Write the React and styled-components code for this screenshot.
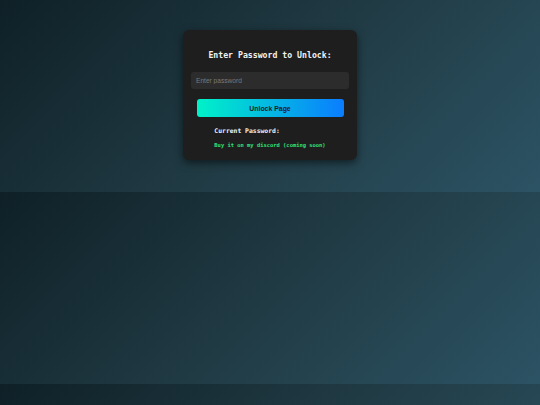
import React from "react";
import styled, { createGlobalStyle } from "styled-components";

const GlobalStyle = createGlobalStyle`
  body {
    margin: 0;
    background: linear-gradient(135deg, #0f2027, #203a43, #2c5364);
  }
`;

const Page = styled.div`
  display: flex;
  justify-content: center;
  padding: 30px 0 32px;
`;

const Card = styled.div`
  width: 174px;
  box-sizing: border-box;
  padding: 20px 8px 11px;
  background-color: #1e1e1e;
  border-radius: 6px;
  box-shadow: 0 3px 8px rgba(0, 0, 0, 0.55);
  display: flex;
  flex-direction: column;
  align-items: center;
`;

const Title = styled.h2`
  margin: 0;
  font-family: "DejaVu Sans Mono", monospace;
  font-size: 8.2px;
  line-height: 10px;
  font-weight: bold;
  color: #f2f2f2;
`;

const Input = styled.input`
  margin-top: 11.5px;
  width: 158px;
  height: 17.5px;
  box-sizing: border-box;
  padding: 0 5px;
  border: none;
  border-radius: 3px;
  background-color: #2c2c2c;
  color: #eee;
  font-family: "Liberation Sans", Arial, sans-serif;
  font-size: 6.6px;
  outline: none;

  &::placeholder {
    color: #7a7a7a;
  }
`;

const Button = styled.button`
  margin-top: 10px;
  width: 147px;
  height: 18px;
  border: none;
  border-radius: 3px;
  background: linear-gradient(90deg, #00f2c8, #0a7dff);
  color: #1c1c1c;
  font-family: "Liberation Sans", Arial, sans-serif;
  font-weight: bold;
  font-size: 6.9px;
  cursor: pointer;
`;

const Info = styled.div`
  margin-top: 10px;
  text-align: left;
  font-family: "DejaVu Sans Mono", monospace;
  font-weight: bold;
`;

const Label = styled.div`
  font-size: 6.4px;
  line-height: 8px;
  color: #f2f2f2;
`;

const Note = styled.div`
  margin-top: 7px;
  font-size: 5.45px;
  line-height: 7px;
  color: #2fe27c;
`;

export default function App() {
  return (
    <>
      <GlobalStyle />
      <Page>
        <Card>
          <Title>Enter Password to Unlock:</Title>
          <Input type="password" placeholder="Enter password" />
          <Button>Unlock Page</Button>
          <Info>
            <Label>Current Password:</Label>
            <Note>Buy it on my discord (coming soon)</Note>
          </Info>
        </Card>
      </Page>
    </>
  );
}
